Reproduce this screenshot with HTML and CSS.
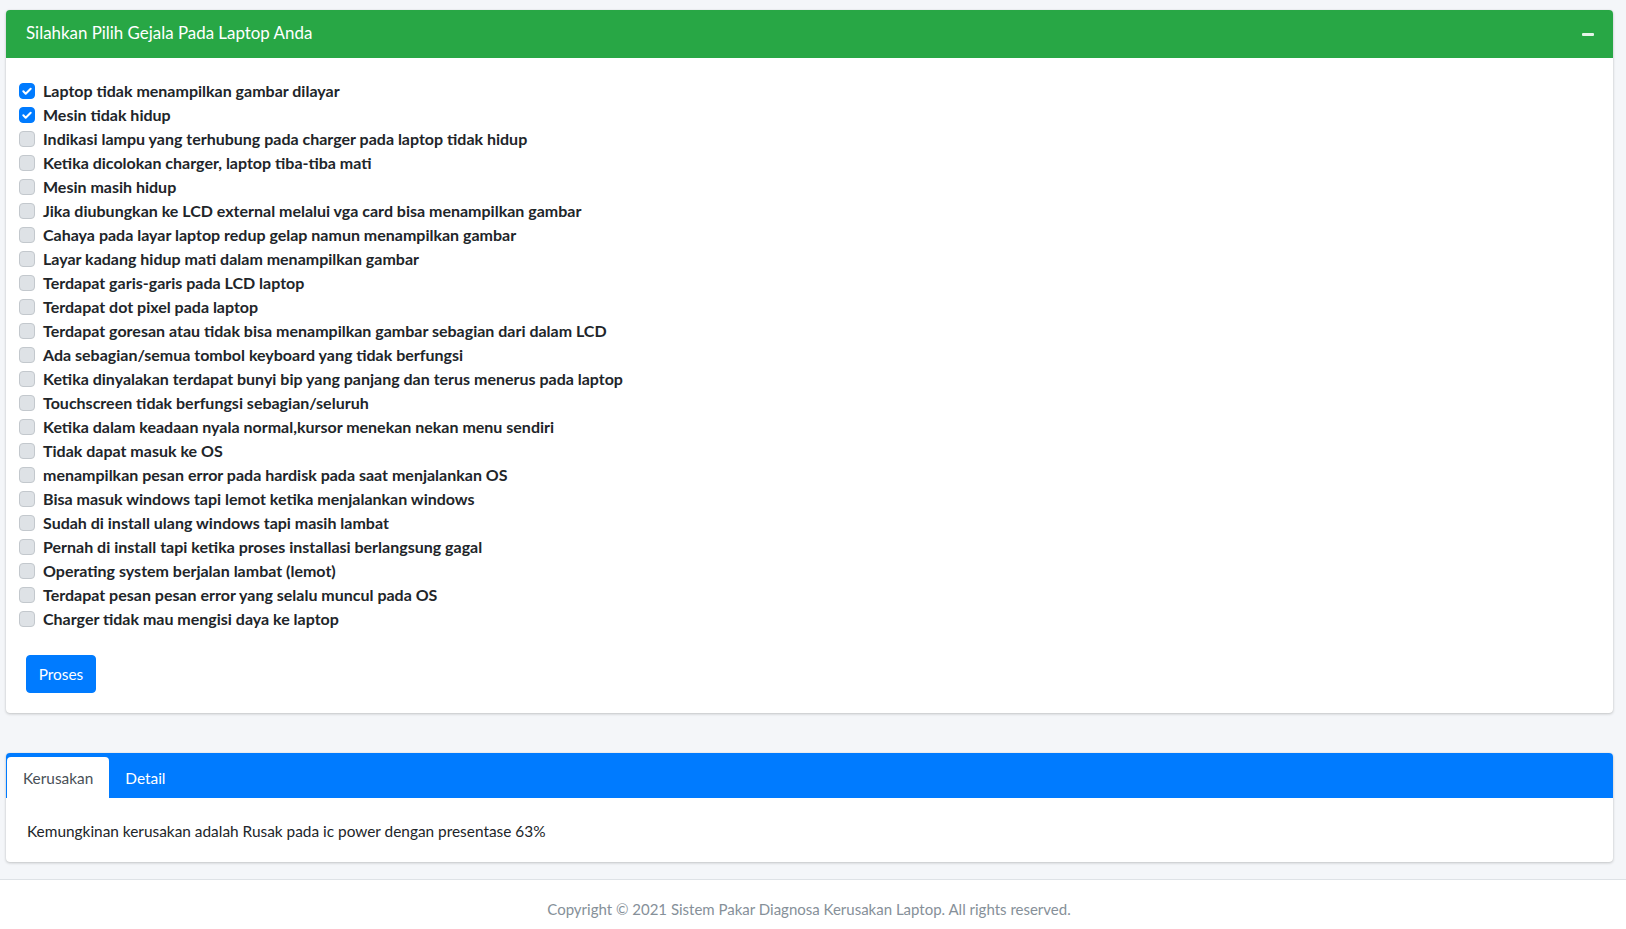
FILE: index.html
```html
<!DOCTYPE html>
<html lang="id">
<head>
<meta charset="utf-8">
<title>Sistem Pakar Diagnosa Kerusakan Laptop</title>
<link rel="stylesheet" href="styles.css">
</head>
<body>
<div class="content">
  <div class="card">
    <div class="card-header green">
      <h3 class="card-title">Silahkan Pilih Gejala Pada Laptop Anda</h3>
      <span class="tool-minus"></span>
    </div>
    <div class="card-body form-body">
      <ul class="gejala">
        <li><span class="box checked"><svg viewBox="0 0 16 16" width="16" height="16"><path d="M4.3 8.3l2.4 2.4 5-5" fill="none" stroke="#fff" stroke-width="2" stroke-linecap="round" stroke-linejoin="round"/></svg></span>Laptop tidak menampilkan gambar dilayar</li>
        <li><span class="box checked"><svg viewBox="0 0 16 16" width="16" height="16"><path d="M4.3 8.3l2.4 2.4 5-5" fill="none" stroke="#fff" stroke-width="2" stroke-linecap="round" stroke-linejoin="round"/></svg></span>Mesin tidak hidup</li>
        <li><span class="box"></span>Indikasi lampu yang terhubung pada charger pada laptop tidak hidup</li>
        <li><span class="box"></span>Ketika dicolokan charger, laptop tiba-tiba mati</li>
        <li><span class="box"></span>Mesin masih hidup</li>
        <li><span class="box"></span>Jika diubungkan ke LCD external melalui vga card bisa menampilkan gambar</li>
        <li><span class="box"></span>Cahaya pada layar laptop redup gelap namun menampilkan gambar</li>
        <li><span class="box"></span>Layar kadang hidup mati dalam menampilkan gambar</li>
        <li><span class="box"></span>Terdapat garis-garis pada LCD laptop</li>
        <li><span class="box"></span>Terdapat dot pixel pada laptop</li>
        <li><span class="box"></span>Terdapat goresan atau tidak bisa menampilkan gambar sebagian dari dalam LCD</li>
        <li><span class="box"></span>Ada sebagian/semua tombol keyboard yang tidak berfungsi</li>
        <li><span class="box"></span>Ketika dinyalakan terdapat bunyi bip yang panjang dan terus menerus pada laptop</li>
        <li><span class="box"></span>Touchscreen tidak berfungsi sebagian/seluruh</li>
        <li><span class="box"></span>Ketika dalam keadaan nyala normal,kursor menekan nekan menu sendiri</li>
        <li><span class="box"></span>Tidak dapat masuk ke OS</li>
        <li><span class="box"></span>menampilkan pesan error pada hardisk pada saat menjalankan OS</li>
        <li><span class="box"></span>Bisa masuk windows tapi lemot ketika menjalankan windows</li>
        <li><span class="box"></span>Sudah di install ulang windows tapi masih lambat</li>
        <li><span class="box"></span>Pernah di install tapi ketika proses installasi berlangsung gagal</li>
        <li><span class="box"></span>Operating system berjalan lambat (lemot)</li>
        <li><span class="box"></span>Terdapat pesan pesan error yang selalu muncul pada OS</li>
        <li><span class="box"></span>Charger tidak mau mengisi daya ke laptop</li>
      </ul>
      <button class="btn-primary" type="button">Proses</button>
    </div>
  </div>

  <div class="card tabs-card">
    <div class="tabs-header">
      <span class="tab active">Kerusakan</span>
      <span class="tab">Detail</span>
    </div>
    <div class="card-body result-body">
      Kemungkinan kerusakan adalah Rusak pada ic power dengan presentase 63%
    </div>
  </div>
</div>
<footer class="footer">
  Copyright © 2021 Sistem Pakar Diagnosa Kerusakan Laptop. All rights reserved.
</footer>
</body>
</html>
```

FILE: styles.css
```css
* { box-sizing: border-box; }
html, body { margin: 0; padding: 0; }
body {
  background: #f4f6f9;
  font-family: Lato, "Noto Sans", sans-serif;
  color: #212529;
  font-size: 16px;
}
.content {
  padding: 10px 13px 0 6px;
}
.card {
  background: #fff;
  border-radius: 4px;
  box-shadow: 0 0 1px rgba(0,0,0,.125), 0 1px 3px rgba(0,0,0,.2);
  margin-bottom: 40px;
}
.card-header.green {
  background: #28a745;
  color: #fff;
  height: 48px;
  padding: 0 20px 3px;
  border-radius: 4px 4px 0 0;
  display: flex;
  align-items: center;
  justify-content: space-between;
}
.card-title {
  margin: 0;
  font-size: 16.9px;
  font-weight: 400;
}
.tool-minus {
  width: 12px;
  height: 3px;
  background: rgba(255,255,255,.88);
  border-radius: 1px;
  margin-right: -1px;
  margin-top: 3px;
}
.form-body {
  padding: 20px 20px 20px 13px;
}
.gejala {
  list-style: none;
  margin: 0 0 25px;
  padding: 0;
}
.gejala li {
  display: flex;
  align-items: center;
  height: 24px;
  font-weight: 700;
  font-size: 16px;
  color: #212529;
}
.box {
  width: 16px;
  height: 16px;
  border-radius: 4px;
  background: #dee2e6;
  border: 1px solid #c3c8cd;
  margin-right: 8px;
  margin-top: 1px;
  flex: none;
  display: flex;
}
.box.checked {
  background: #007bff;
  border-color: #007bff;
}
.box svg { margin: -1px; }
.btn-primary {
  margin-left: 7px;
  height: 38px;
  width: 70px;
  padding: 0;
  background: #007bff;
  color: #fff;
  border: 1px solid #007bff;
  border-radius: 4px;
  font-family: inherit;
  font-size: 15.4px;
  display: block;
}
.tabs-card {
  margin-bottom: 17px;
}
.tabs-header {
  background: #007bff;
  height: 45px;
  border-radius: 4px 4px 0 0;
  display: flex;
  align-items: flex-end;
  padding-left: 1px;
}
.tab {
  height: 41px;
  padding: 0 16px;
  display: flex;
  align-items: center;
  color: #fff;
  font-size: 15.4px;
}
.tab.active {
  background: #fff;
  color: #495057;
  border-radius: 4px 4px 0 0;
}
.result-body {
  padding: 21px 20px 19px 21px;
  line-height: 24px;
  font-size: 15.4px;
  color: #212529;
}
.footer {
  background: #fff;
  border-top: 1px solid #dee2e6;
  color: #869099;
  text-align: center;
  font-size: 15px;
  padding: 17px 24px 30px 16px;
  line-height: 24px;
}
```
